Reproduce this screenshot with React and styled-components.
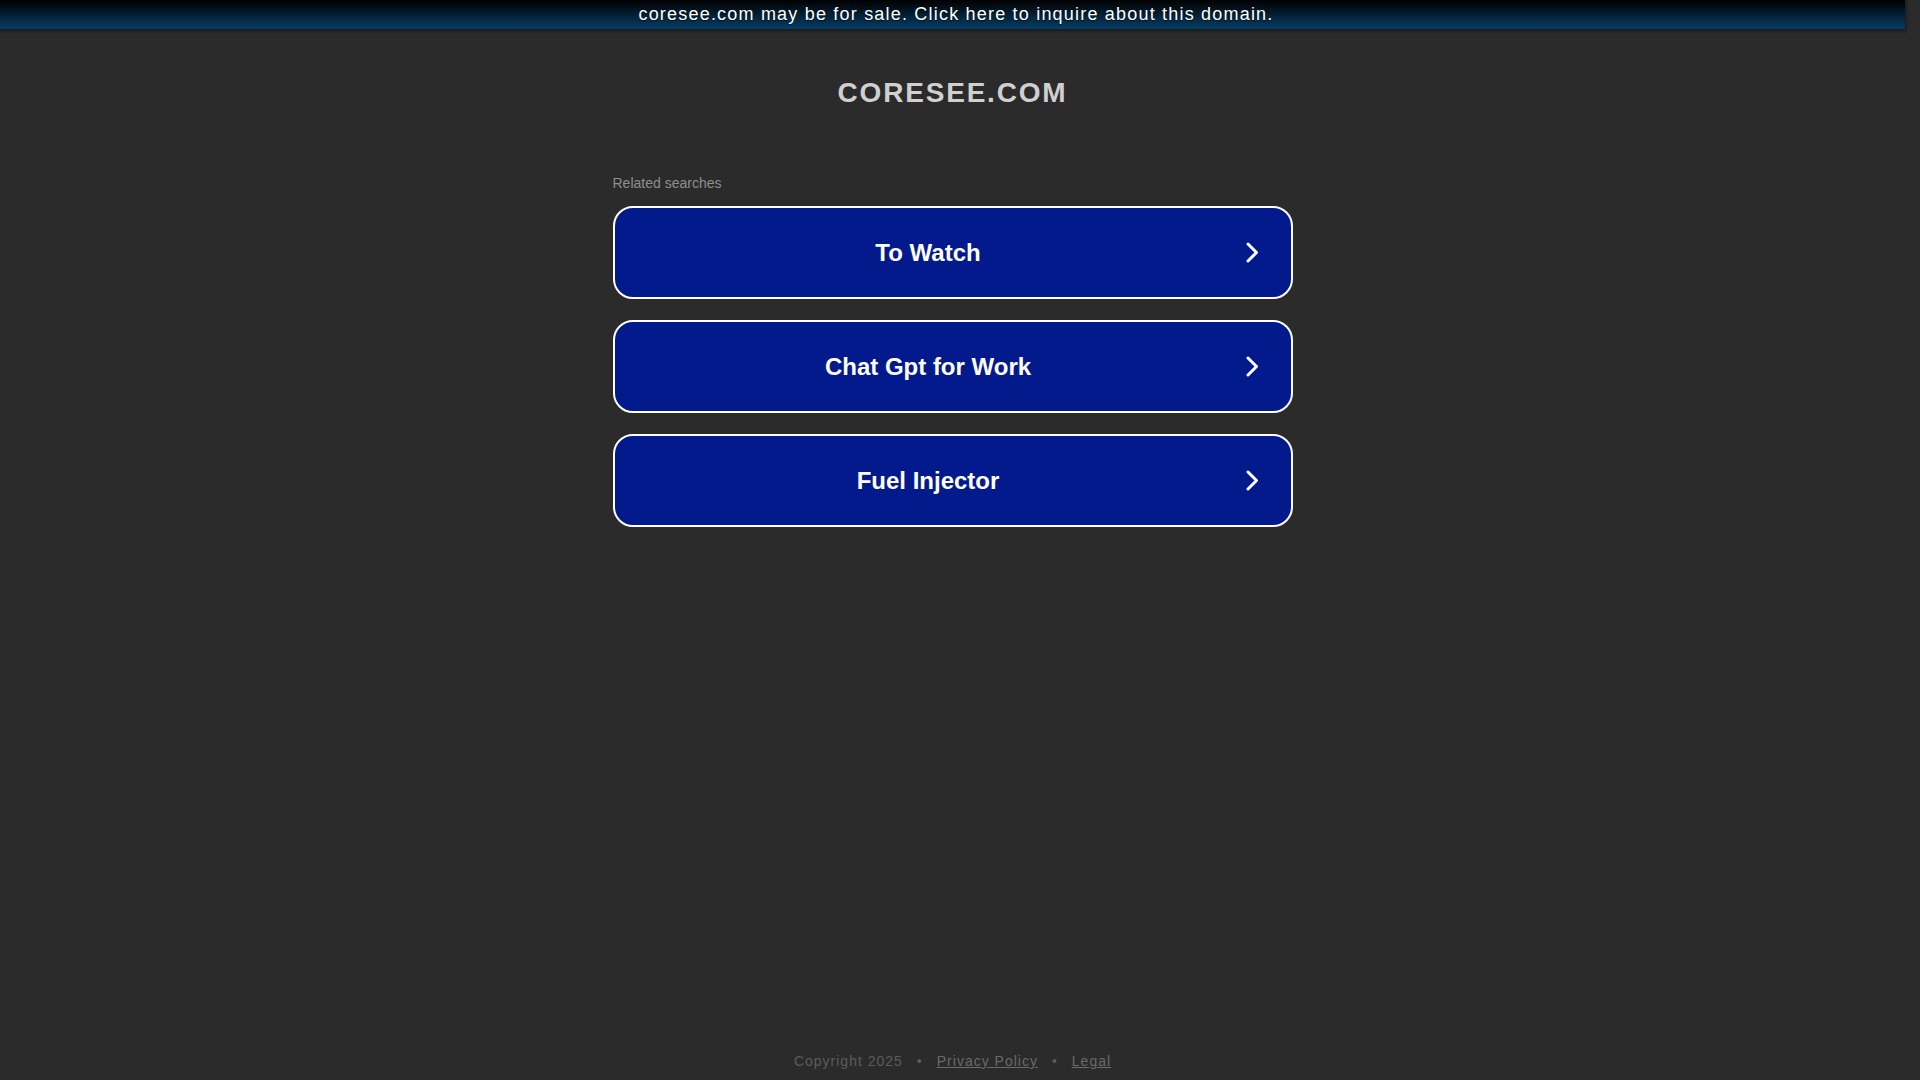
import React from "react";
import styled, { createGlobalStyle } from "styled-components";

const Global = createGlobalStyle`
  html { overflow-y: scroll; color-scheme: dark; }
  body {
    margin: 0;
    background: #2b2b2b;
    font-family: "Liberation Sans", Arial, sans-serif;
  }
`;

const Page = styled.div`
  min-height: 100vh;
  margin-right: 15px;
  display: flex;
  flex-direction: column;
  align-items: center;
`;

const Banner = styled.a`
  display: block;
  box-sizing: border-box;
  width: 100%;
  height: 29px;
  padding-left: 7px;
  line-height: 28px;
  text-align: center;
  color: #fff;
  font-size: 18px;
  letter-spacing: 1.2px;
  text-decoration: none;
  background: linear-gradient(to bottom, #000 0%, #063e66 100%);
  box-shadow: 0 1px 3px 1px rgba(0, 0, 0, 0.45);
  text-shadow: 0 1px 1px rgba(0, 0, 0, 0.6);
`;

const Title = styled.h1`
  margin: 47px 0 0;
  font-size: 28px;
  font-weight: bold;
  letter-spacing: 1.8px;
  color: #d0d0d0;
  line-height: 34px;
`;

const Content = styled.div`
  width: 680px;
  margin-top: 65px;
`;

const Related = styled.div`
  font-size: 14px;
  color: #8f8f8f;
  line-height: 16px;
  margin-bottom: 15px;
`;

const Button = styled.a`
  display: flex;
  align-items: center;
  box-sizing: border-box;
  height: 93px;
  margin-bottom: 21px;
  border: 2px solid #fff;
  border-radius: 20px;
  background: #021a8b;
  color: #fff;
  text-decoration: none;
`;

const Label = styled.span`
  flex: 1;
  text-align: center;
  font-size: 24px;
  font-weight: bold;
`;

const Arrow = styled.svg`
  width: 13px;
  height: 21px;
  margin: 0 32px 0 4px;
`;

const Spacer = styled.div`
  flex: 1;
`;

const Footer = styled.div`
  display: flex;
  gap: 14px;
  align-items: center;
  font-size: 14px;
  letter-spacing: 1px;
  color: #5c5c5c;
  padding-bottom: 11px;
  line-height: 16px;
`;

const FootLink = styled.a`
  color: #6a6a6a;
  text-decoration: underline;
`;

const items = ["To Watch", "Chat Gpt for Work", "Fuel Injector"];

export default function App() {
  return (
    <>
      <Global />
      <Page>
        <Banner href="#">coresee.com may be for sale. Click here to inquire about this domain.</Banner>
        <Title>CORESEE.COM</Title>
        <Content>
          <Related>Related searches</Related>
          {items.map((t) => (
            <Button href="#" key={t}>
              <Label>{t}</Label>
              <Arrow viewBox="0 0 13 21" fill="none">
                <path d="M2 2 L10.5 10.5 L2 19" stroke="#fff" strokeWidth="3" strokeLinecap="round" strokeLinejoin="round" />
              </Arrow>
            </Button>
          ))}
        </Content>
        <Spacer />
        <Footer>
          <span>Copyright 2025</span>
          <span>•</span>
          <FootLink href="#">Privacy Policy</FootLink>
          <span>•</span>
          <FootLink href="#">Legal</FootLink>
        </Footer>
      </Page>
    </>
  );
}
